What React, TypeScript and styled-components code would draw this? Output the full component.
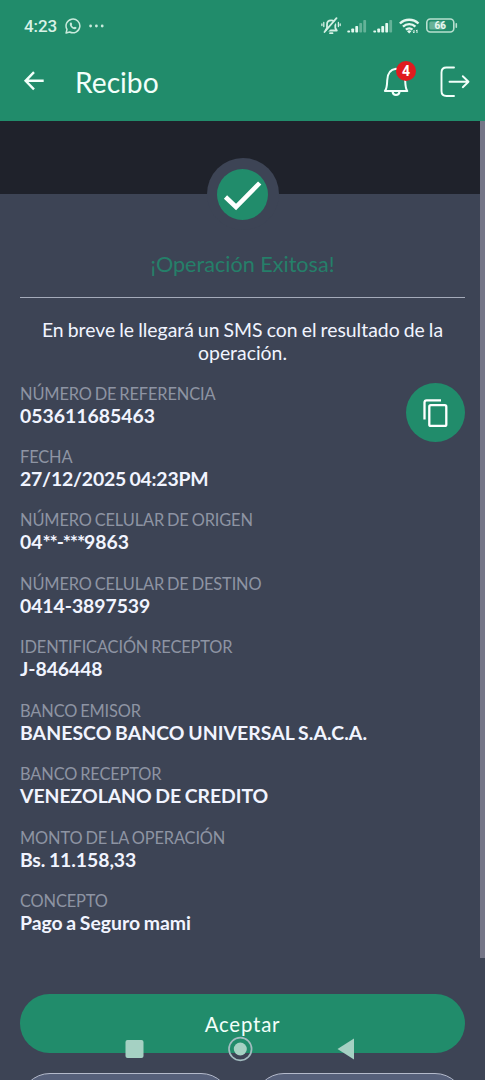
import React from "react";
import styled, { createGlobalStyle } from "styled-components";

const GREEN = "#218c6b";
const PANEL = "#3d4455";
const DARK = "#1f222b";

const GlobalStyle = createGlobalStyle`
  * { box-sizing: border-box; }
  html, body { margin: 0; padding: 0; background: ${PANEL}; }
  body { overflow: hidden; font-family: Lato, "Liberation Sans", sans-serif; }
`;

const Screen = styled.div`
  position: relative;
  width: 485px;
  height: 1080px;
  overflow: hidden;
  background: ${PANEL};
  color: #f1f4ff;
`;

const TopBar = styled.header`
  height: 121px;
  background: ${GREEN};
  color: #f2fffa;
`;

const StatusBar = styled.div`
  display: flex;
  align-items: center;
  justify-content: space-between;
  height: 51px;
  padding: 0 27px 0 24px;
`;

const StatusGroup = styled.div<{ $gap: number }>`
  display: flex;
  align-items: center;
  gap: ${(p) => p.$gap}px;
  svg { display: block; }
`;

const Clock = styled.span`
  font: 500 17px/20px Roboto, sans-serif;
  letter-spacing: -0.1px;
  color: #d9f2e7;
`;

const AppBar = styled.div`
  display: flex;
  align-items: center;
  height: 62px;
  padding: 0 15px 0 22px;
  svg { display: block; }
`;

const Title = styled.h1`
  flex: 1;
  margin: 0 0 0 29px;
  font-size: 28.2px;
  font-weight: 400;
  line-height: 34px;
`;

const BellButton = styled.div`
  position: relative;
  width: 28px;
  height: 34px;
  margin-right: 29px;
`;

const Badge = styled.span`
  position: absolute;
  left: 13px;
  top: -4px;
  width: 20px;
  height: 20px;
  border-radius: 50%;
  background: #e01b1f;
  color: #fff;
  text-align: center;
  font: 700 14px/20px Roboto, sans-serif;
`;

const Band = styled.div`
  display: flex;
  justify-content: center;
  height: 73px;
  padding-top: 37px;
  background: ${DARK};
`;

const CheckRing = styled.div`
  flex: none;
  display: flex;
  align-items: center;
  justify-content: center;
  width: 72px;
  height: 72px;
  border-radius: 50%;
  background: ${PANEL};
`;

const CheckDisc = styled.div`
  width: 51px;
  height: 51px;
  border-radius: 50%;
  background: ${GREEN};
  svg { display: block; }
`;

const Content = styled.main`
  padding: 57px 20px 0;
`;

const Success = styled.h2`
  margin: 0;
  padding-bottom: 19px;
  border-bottom: 1.5px solid #a5abba;
  color: #257f69;
  font-size: 21.6px;
  font-weight: 400;
  line-height: 27px;
  text-align: center;
`;

const Notice = styled.p`
  margin: 20px 0 18px;
  font-size: 19.4px;
  line-height: 23.3px;
  word-spacing: -0.9px;
  text-align: center;
`;

const Receipt = styled.div`
  display: flex;
  justify-content: space-between;
  align-items: flex-start;
`;

const Details = styled.dl`
  margin: 0;
`;

const Field = styled.div`
  height: 63.44px;
`;

const Label = styled.dt`
  color: #8e94a3;
  font-size: 16.4px;
  line-height: 22px;
  letter-spacing: -0.13px;
  word-spacing: -1.1px;
  white-space: nowrap;
`;

const Value = styled.dd<{ $tracking: number }>`
  margin: 0;
  color: #f1f4ff;
  font-size: 19.4px;
  font-weight: 700;
  line-height: 21px;
  letter-spacing: ${(p) => p.$tracking}px;
  word-spacing: -1.1px;
  white-space: nowrap;
`;

const Mask = styled.span`
  letter-spacing: -1.15px;
`;

const CopyButton = styled.button`
  display: flex;
  align-items: center;
  justify-content: center;
  width: 59px;
  height: 59px;
  padding: 0;
  border: 0;
  border-radius: 50%;
  background: ${GREEN};
`;

const AcceptButton = styled.button`
  display: block;
  width: 100%;
  height: 59.500px;
  margin-top: 40px;
  padding: 0;
  border: 0;
  border-radius: 30px;
  background: ${GREEN};
  color: #f2fffa;
  font: 400 20.400px/60px Lato, sans-serif;
  letter-spacing: 0.8px;
`;

const SecondaryRow = styled.div`
  display: flex;
  gap: 23px;
  margin-top: 19.500px;
`;

const SecondaryButton = styled.div`
  flex: 1;
  height: 60px;
  border: 1.5px solid #b4bacb;
  border-radius: 30px;
  background: #56607a;
`;

const ScrollThumb = styled.div`
  position: absolute;
  top: 121px;
  right: 0;
  width: 5px;
  height: 837px;
  background: #747587;
`;

const SystemNav = styled.nav`
  position: absolute;
  left: 0;
  bottom: 18px;
  width: 100%;
  height: 26px;
  svg { display: block; }
`;

interface FieldData {
  label: string;
  value: React.ReactNode;
  tracking?: number;
}

const fields: FieldData[] = [
  { label: "NÚMERO DE REFERENCIA", value: "053611685463" },
  { label: "FECHA", value: "27/12/2025 04:23PM", tracking: -0.2 },
  { label: "NÚMERO CELULAR DE ORIGEN", value: <>04<Mask>**-***</Mask>9863</> },
  { label: "NÚMERO CELULAR DE DESTINO", value: "0414-3897539", tracking: -0.06 },
  { label: "IDENTIFICACIÓN RECEPTOR", value: "J-846448", tracking: -0.06 },
  { label: "BANCO EMISOR", value: "BANESCO BANCO UNIVERSAL S.A.C.A.", tracking: 0.07 },
  { label: "BANCO RECEPTOR", value: "VENEZOLANO DE CREDITO", tracking: -0.03 },
  { label: "MONTO DE LA OPERACIÓN", value: "Bs. 11.158,33", tracking: -0.06 },
  { label: "CONCEPTO", value: "Pago a Seguro mami" },
];

const WhatsAppIcon = () => (
  <svg width="16" height="16" viewBox="0 0 16 16" fill="none" stroke="#c9eadc">
    <path d="M1.1 15 2 11.4A6.9 6.9 0 1 1 4.7 14Z" strokeWidth="1.5" strokeLinejoin="round" />
    <path d="M5.5 4.5c-1.5 1.2-.6 3.400.9 5s3.600 2.400 4.900 1.100c.4-.6.300-1-.2-1.300l-1-.5c-.5-.2-.8.5-1.200.5-1-.3-1.900-1.300-2.200-2.100 0-.4.6-.7.400-1.200l-.5-1.200c-.2-.4-.7-.5-1.100-.3Z" fill="#c9eadc" stroke="none" />
  </svg>
);

const DotsIcon = () => (
  <svg width="15" height="4" viewBox="0 0 15 4" fill="#c9eadc">
    <circle cx="1.6" cy="2" r="1.4" />
    <circle cx="7.4" cy="2" r="1.4" />
    <circle cx="13.2" cy="2" r="1.4" />
  </svg>
);

const MutedBellIcon = () => (
  <svg width="20" height="18" viewBox="0 0 20 18" fill="none" stroke="#d3f0e4" strokeWidth="1.8" strokeLinecap="round">
    <path d="M4.5 13.5h11.3L14.3 11V7.5C14.3 5 12.600 3.300 10.200 3.300S6 5 6 7.500V11Z" strokeLinejoin="round" />
    <path d="M9 16.200h2.500" />
    <path d="M2.800 5.500v4M.9 7v1.500M17.400 5.500v4M19.200 7v1.500" strokeWidth="1.300" />
    <path d="M5.200 15.500 17 2" stroke={GREEN} strokeWidth="2" />
    <path d="M3.500 15 15.500 1.200" />
  </svg>
);

const SignalIcon = ({ level }: { level: number }) => (
  <svg width="20" height="14" viewBox="0 0 20 14" fill="#e4f8ef">
    {[2, 4, 6.5, 9.5, 12.5].map((h, i) => (
      <rect key={h} x={0.3 + i * 4} y={13.5 - h} width="2.800" height={h} rx=".8" opacity={i < level ? 1 : 0.35} />
    ))}
  </svg>
);

const WifiIcon = () => (
  <svg width="21" height="16" viewBox="0 0 21 16" fill="none" stroke="#e4f8ef" strokeWidth="2.4">
    <path d="M.9 5.500a13.500 13.500 0 0 1 18.600 0M4 8.600a9 9 0 0 1 12.400 0M6.900 11.600a5 5 0 0 1 6.600 0" />
    <path d="m10.200 15.600-2.200-2.400a2.800 2.800 0 0 1 4.400 0Z" fill="#e4f8ef" stroke="none" />
    <path d="M15 15v-3M18 15v-3M14 13.700l1 1.300M17 13.100l1-1.300" strokeWidth="1" />
  </svg>
);

const BatteryIcon = () => (
  <svg width="32" height="15" viewBox="0 0 32 15">
    <rect x=".8" y="1" width="27" height="13" rx="3.500" fill="none" stroke="#b8dfcf" strokeWidth="1.600" />
    <rect x="3.300" y="3.400" width="15" height="8.200" rx="1.500" fill="#68b197" />
    <rect x="29.500" y="5" width="1.600" height="5" rx=".8" fill="#b8dfcf" />
    <text x="14.300" y="11.200" textAnchor="middle" fill="#e8f8f1" fontFamily="Roboto, sans-serif" fontSize="10" fontWeight="700">66</text>
  </svg>
);

export default function App() {
  return (
    <Screen>
      <GlobalStyle />
      <TopBar>
        <StatusBar>
          <StatusGroup $gap={8}>
            <Clock>4:23</Clock>
            <WhatsAppIcon />
            <DotsIcon />
          </StatusGroup>
          <StatusGroup $gap={6}>
            <MutedBellIcon />
            <SignalIcon level={3} />
            <SignalIcon level={4} />
            <WifiIcon />
            <BatteryIcon />
          </StatusGroup>
        </StatusBar>
        <AppBar>
          <svg width="24" height="24" viewBox="0 0 24 24" fill="none" stroke="#f2fffa" strokeWidth="2.4">
            <path d="M21.7 10.800H3.800M12 2.200 3.600 10.800l8.400 8.600" />
          </svg>
          <Title>Recibo</Title>
          <BellButton>
            <svg width="28" height="34" viewBox="0 0 28 34" fill="none" stroke="#f2fffa" strokeWidth="2" strokeLinejoin="round" strokeLinecap="round">
              <path d="M1.900 26C4 23.500 4 21 4.200 15.500 4.300 9 7 4.400 13 3.700c6.400.7 9 5.300 9.200 11.800 .2 5.500.2 8 2.100 10.500Z" />
              <path d="M9.500 26.500c.3 2.200 1.700 3.500 3.500 3.500s3.300-1.300 3.600-3.500" />
            </svg>
            <Badge>4</Badge>
          </BellButton>
          <svg width="30" height="32" viewBox="0 0 30 32" fill="none" stroke="#f2fffa" strokeWidth="1.9" strokeLinecap="round" strokeLinejoin="round">
            <path d="M14 1.500H6.500C3.300 1.500 1.500 3.300 1.500 6.500v18.500c0 3.200 1.800 5 5 5H14M9.500 15.700H28M22.800 10.200 28.500 15.700l-5.700 5.500" />
          </svg>
        </AppBar>
      </TopBar>
      <Band>
        <CheckRing>
          <CheckDisc>
            <svg width="51" height="51" viewBox="0 0 51 51" fill="none" stroke="#fff" strokeWidth="4.600">
              <path d="M8.500 28 19 38 42.700 14" />
            </svg>
          </CheckDisc>
        </CheckRing>
      </Band>
      <Content>
        <Success>¡Operación Exitosa!</Success>
        <Notice>En breve le llegará un SMS con el resultado de la operación.</Notice>
        <Receipt>
          <Details>
            {fields.map(({ label, value, tracking = 0 }) => (
              <Field key={label}>
                <Label>{label}</Label>
                <Value $tracking={tracking}>{value}</Value>
              </Field>
            ))}
          </Details>
          <CopyButton aria-label="Copiar">
            <svg width="59" height="59" viewBox="0 0 59 59" fill="none" stroke="#fff" strokeWidth="2.300">
              <path d="M18.500 36.500V19.500Q18.500 17.300 20.700 17.300H35" />
              <rect x="23.300" y="22.200" width="17" height="20.700" rx="1.500" />
            </svg>
          </CopyButton>
        </Receipt>
        <AcceptButton>Aceptar</AcceptButton>
        <SecondaryRow>
          <SecondaryButton />
          <SecondaryButton />
        </SecondaryRow>
      </Content>
      <ScrollThumb />
      <SystemNav>
        <svg width="485" height="26" viewBox="0 0 485 26" fill="#a5d1c3">
          <rect x="125.500" y="4" width="18" height="18" rx="2" />
          <circle cx="240.300" cy="13" r="11.300" fill="none" stroke="#a3bcc0" strokeWidth="1.700" />
          <circle cx="240.300" cy="13" r="6.500" />
          <path d="M337.500 13 354 2.500v21Z" />
        </svg>
      </SystemNav>
    </Screen>
  );
}
